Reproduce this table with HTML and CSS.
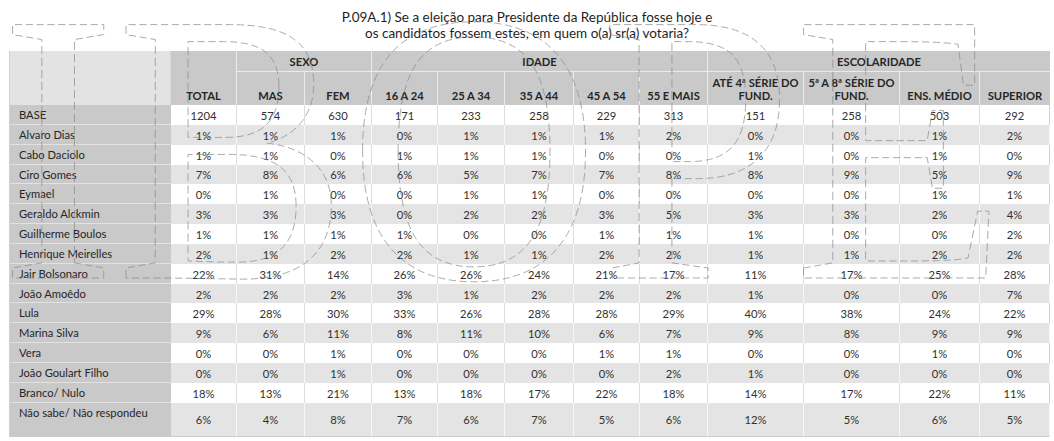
FILE: index.html
```html
<!DOCTYPE html>
<html lang="pt-BR">
<head>
<meta charset="utf-8">
<title>P.09A.1</title>
<link rel="stylesheet" href="styles.css">
</head>
<body>
<div class="page">
  <h1 class="title">P.09A.1) Se a eleição para Presidente da República fosse hoje e<br>os candidatos fossem estes, em quem o(a) sr(a) votaria?</h1>
  <div class="table-wrap">
    <table class="grid">
      <colgroup>
        <col class="c-label"><col class="c66"><col class="c68"><col class="c67">
        <col class="c66"><col class="c67"><col class="c69"><col class="c66"><col class="c68">
        <col class="c96"><col class="c96"><col class="c80"><col class="c70">
      </colgroup>
      <thead>
        <tr class="h1">
          <th class="corner" rowspan="2"></th>
          <th class="sub" rowspan="2">TOTAL</th>
          <th colspan="2">SEXO</th>
          <th colspan="5">IDADE</th>
          <th colspan="4" class="last">ESCOLARIDADE</th>
        </tr>
        <tr class="h2">
          <th class="sub">MAS</th><th class="sub">FEM</th>
          <th class="sub">16 A 24</th><th class="sub">25 A 34</th><th class="sub">35 A 44</th><th class="sub">45 A 54</th><th class="sub">55 E MAIS</th>
          <th class="sub">ATÉ 4ª SÉRIE DO<br>FUND.</th><th class="sub">5ª A 8ª SÉRIE DO<br>FUND.</th><th class="sub">ENS. MÉDIO</th><th class="sub last">SUPERIOR</th>
        </tr>
      </thead>
      <tbody>
        <tr class="w"><th>BASE</th><td>1204</td><td>574</td><td>630</td><td>171</td><td>233</td><td>258</td><td>229</td><td>313</td><td>151</td><td>258</td><td>503</td><td>292</td></tr>
        <tr class="g"><th>Alvaro Dias</th><td>1%</td><td>1%</td><td>1%</td><td>0%</td><td>1%</td><td>1%</td><td>1%</td><td>2%</td><td>0%</td><td>0%</td><td>1%</td><td>2%</td></tr>
        <tr class="w"><th>Cabo Daciolo</th><td>1%</td><td>1%</td><td>0%</td><td>1%</td><td>1%</td><td>1%</td><td>0%</td><td>0%</td><td>1%</td><td>0%</td><td>1%</td><td>0%</td></tr>
        <tr class="g"><th>Ciro Gomes</th><td>7%</td><td>8%</td><td>6%</td><td>6%</td><td>5%</td><td>7%</td><td>7%</td><td>8%</td><td>8%</td><td>9%</td><td>5%</td><td>9%</td></tr>
        <tr class="w"><th>Eymael</th><td>0%</td><td>1%</td><td>0%</td><td>0%</td><td>1%</td><td>1%</td><td>0%</td><td>0%</td><td>0%</td><td>0%</td><td>1%</td><td>1%</td></tr>
        <tr class="g"><th>Geraldo Alckmin</th><td>3%</td><td>3%</td><td>3%</td><td>0%</td><td>2%</td><td>2%</td><td>3%</td><td>5%</td><td>3%</td><td>3%</td><td>2%</td><td>4%</td></tr>
        <tr class="w"><th>Guilherme Boulos</th><td>1%</td><td>1%</td><td>1%</td><td>1%</td><td>0%</td><td>0%</td><td>1%</td><td>1%</td><td>1%</td><td>0%</td><td>0%</td><td>2%</td></tr>
        <tr class="g"><th>Henrique Meirelles</th><td>2%</td><td>1%</td><td>2%</td><td>2%</td><td>1%</td><td>1%</td><td>2%</td><td>2%</td><td>1%</td><td>1%</td><td>2%</td><td>2%</td></tr>
        <tr class="w"><th>Jair Bolsonaro</th><td>22%</td><td>31%</td><td>14%</td><td>26%</td><td>26%</td><td>24%</td><td>21%</td><td>17%</td><td>11%</td><td>17%</td><td>25%</td><td>28%</td></tr>
        <tr class="g"><th>João Amoêdo</th><td>2%</td><td>2%</td><td>2%</td><td>3%</td><td>1%</td><td>2%</td><td>2%</td><td>2%</td><td>1%</td><td>0%</td><td>0%</td><td>7%</td></tr>
        <tr class="w"><th>Lula</th><td>29%</td><td>28%</td><td>30%</td><td>33%</td><td>26%</td><td>28%</td><td>28%</td><td>29%</td><td>40%</td><td>38%</td><td>24%</td><td>22%</td></tr>
        <tr class="g"><th>Marina Silva</th><td>9%</td><td>6%</td><td>11%</td><td>8%</td><td>11%</td><td>10%</td><td>6%</td><td>7%</td><td>9%</td><td>8%</td><td>9%</td><td>9%</td></tr>
        <tr class="w"><th>Vera</th><td>0%</td><td>0%</td><td>1%</td><td>0%</td><td>0%</td><td>0%</td><td>1%</td><td>1%</td><td>0%</td><td>0%</td><td>1%</td><td>0%</td></tr>
        <tr class="g"><th>João Goulart Filho</th><td>0%</td><td>0%</td><td>1%</td><td>0%</td><td>0%</td><td>0%</td><td>0%</td><td>2%</td><td>1%</td><td>0%</td><td>0%</td><td>0%</td></tr>
        <tr class="w"><th>Branco/ Nulo</th><td>18%</td><td>13%</td><td>21%</td><td>13%</td><td>18%</td><td>17%</td><td>22%</td><td>18%</td><td>14%</td><td>17%</td><td>22%</td><td>11%</td></tr>
        <tr class="g tall"><th>Não sabe/ Não respondeu</th><td>6%</td><td>4%</td><td>8%</td><td>7%</td><td>6%</td><td>7%</td><td>5%</td><td>6%</td><td>12%</td><td>5%</td><td>6%</td><td>5%</td></tr>
      </tbody>
    </table>
  </div>
  <svg class="watermark" width="1054" height="441" viewBox="0 0 1054 441" aria-hidden="true">
    <text class="wm-text" x="0" y="278" transform="scale(0.9 1)">IBOPE</text>
  </svg>
</div>
</body>
</html>
```
FILE: styles.css
```css
* { box-sizing: border-box; }
html, body { margin: 0; padding: 0; background: #ffffff; }
body { font-family: "Lato", "Liberation Sans", sans-serif; color: #333333; }

.page { width: 1054px; height: 441px; overflow: hidden; position: relative; }

.title {
  margin: 0;
  padding-top: 9px;
  height: 51px;
  font-size: 13.5px;
  font-weight: 400;
  line-height: 16px;
  text-align: center;
  color: #1f1f1f;
}

.table-wrap { padding-left: 9px; }

.grid {
  border-collapse: separate;
  border-spacing: 0;
  table-layout: fixed;
  width: 1040px;
  font-size: 11.2px;
  border-left: 1px solid #d0d0d0;
}
.c-label { width: 161px; }
.c66 { width: 66px; } .c67 { width: 67px; } .c68 { width: 68px; } .c69 { width: 69px; }
.c70 { width: 70px; } .c80 { width: 80px; } .c96 { width: 96px; }

thead th {
  background: #c9c9c9;
  font-weight: 700;
  color: #262626;
  text-align: center;
  border-right: 1px solid #ebebeb;
  padding: 0 2px;
  line-height: 13px;
}
thead th.last { border-right: none; }
.h1 th { height: 21px; border-bottom: 1px solid #ebebeb; vertical-align: middle; }
.h2 th { height: 33px; }
th.sub { vertical-align: bottom; padding-bottom: 3px; }
thead th.corner { background: #e3e3e3; border-bottom: none; border-right: 1px solid #d6d6d6; }
thead tr.h1 th.sub { border-bottom: none; }

tbody tr { height: 19.85px; }
tbody tr.tall { height: 34px; }
tbody th {
  background: #c9c9c9;
  font-weight: 400;
  color: #262626;
  text-align: left;
  padding: 2px 0 0 9px;
  vertical-align: top;
  line-height: 15px;
  border-bottom: 1px solid #e2e2e2;
  white-space: nowrap;
}
tbody td {
  text-align: center;
  vertical-align: middle;
  color: #303030;
  padding: 1px 0 0 0;
  line-height: 15px;
  border-right: 1px solid #dcdcdc;
}
tbody tr.g td { background: #e4e4e4; border-right-color: #f6f6f6; }
tbody tr.w td { background: #ffffff; }
tbody td:last-child { border-right: 1px solid #d0d0d0; }
tbody tr:last-child th, tbody tr:last-child td { border-bottom: 1px solid #cccccc; }

.watermark {
  position: absolute;
  left: 0;
  top: 0;
  pointer-events: none;
}
.wm-text {
  font-family: "Liberation Serif", "Times New Roman", serif;
  font-size: 387px;
  fill: none;
  stroke: #8a8a8a;
  stroke-width: 1;
  stroke-dasharray: 8 4;
  opacity: 0.75;
}
```
